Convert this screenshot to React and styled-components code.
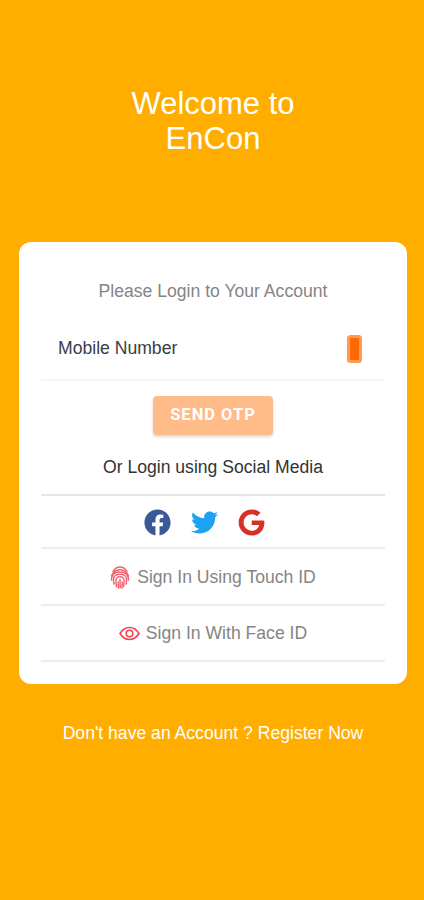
import React from "react";
import styled, { createGlobalStyle } from "styled-components";
import { FaFacebook, FaTwitter, FaGoogle } from "react-icons/fa";

const Global = createGlobalStyle`
  html, body { margin: 0; padding: 0; background: #ffae00; }
  * { box-sizing: border-box; }
`;

const Page = styled.div`
  width: 424px;
  height: 900px;
  background: #ffae00;
  padding: 87px 19px 0;
  font-family: "Liberation Sans", Arial, sans-serif;
`;

const Title = styled.h1`
  margin: 0 0 86px;
  padding-left: 2px;
  color: #fff;
  font-size: 31px;
  font-weight: 400;
  line-height: 34.5px;
  text-align: center;
`;

const Card = styled.div`
  width: 388px;
  height: 442px;
  background: #fff;
  border-radius: 12px;
  padding: 38px 22px 0;
  display: flex;
  flex-direction: column;
  align-items: stretch;
`;

const Subtitle = styled.div`
  color: #858585;
  font-size: 17.6px;
  line-height: 22px;
  text-align: center;
`;

const Field = styled.div`
  height: 79px;
  display: flex;
  align-items: center;
  justify-content: space-between;
  padding: 17px 23px 0 17px;
  border-bottom: 2px solid #f6f6f6;
`;

const FieldLabel = styled.span`
  margin-bottom: 2px;
  color: #3a3d4a;
  font-size: 17.6px;
`;

const PhoneIcon = styled.svg`
  width: 15px;
  height: 28px;
  display: block;
`;

const SendButton = styled.button`
  align-self: center;
  width: 120px;
  height: 39px;
  margin-top: 15px;
  padding: 0 0 2px;
  border: 0;
  border-radius: 4px;
  background: #ffbb88;
  color: #fff;
  font-family: Roboto, sans-serif;
  font-size: 16.5px;
  font-weight: 700;
  letter-spacing: 1px;
  box-shadow: 0 2px 3px rgba(0, 0, 0, 0.16);
`;

const SocialTitle = styled.div`
  margin-top: 21px;
  padding-bottom: 16px;
  border-bottom: 2px solid #e6e6e6;
  color: #333;
  font-size: 17.6px;
  line-height: 22px;
  text-align: center;
`;

const SocialRow = styled.div`
  height: 53px;
  display: flex;
  align-items: center;
  justify-content: center;
  gap: 20px;
  padding: 2px 17px 0 0;
  border-bottom: 2px solid #ededed;
`;

const SocialIcon = styled.span`
  display: flex;
  color: ${(p) => p.$color};
  font-size: 27px;
`;

const SignInRow = styled.div`
  height: 56.5px;
  display: flex;
  align-items: center;
  justify-content: center;
  gap: ${(p) => p.$gap}px;
  padding-top: 2px;
  border-bottom: 2px solid #ededed;
  color: #858585;
  font-size: 17.6px;
`;

const FingerIcon = styled.svg`
  width: 20px;
  height: 23px;
  display: block;
`;

const EyeIcon = styled.svg`
  width: 21px;
  height: 15px;
  display: block;
`;

const Footer = styled.div`
  margin-top: 38px;
  padding-left: 2px;
  color: #fff;
  font-size: 17.6px;
  line-height: 22px;
  text-align: center;
`;

export default function App() {
  return (
    <Page>
      <Global />
      <Title>
        Welcome to
        <br />
        EnCon
      </Title>
      <Card>
        <Subtitle>Please Login to Your Account</Subtitle>
        <Field>
          <FieldLabel>Mobile Number</FieldLabel>
          <PhoneIcon viewBox="0 0 15 28">
            <rect x="0" y="0" width="15" height="28" rx="3.5" fill="#ff9a55" />
            <rect x="3" y="3" width="9" height="22" rx="0.5" fill="#ff6a00" />
          </PhoneIcon>
        </Field>
        <SendButton>SEND OTP</SendButton>
        <SocialTitle>Or Login using Social Media</SocialTitle>
        <SocialRow>
          <SocialIcon $color="#3b5998"><FaFacebook /></SocialIcon>
          <SocialIcon $color="#1da1f2"><FaTwitter /></SocialIcon>
          <SocialIcon $color="#d93025"><FaGoogle /></SocialIcon>
        </SocialRow>
        <SignInRow $gap={7}>
          <FingerIcon viewBox="0 0 20 23" fill="none" stroke="#f2606c" strokeLinecap="round" strokeWidth="1.5">
            <path d="M3 5.500C5 2 8 1 10 1s5 1 7 4.500" />
            <path d="M1.500 10C3 6 6.500 3.700 10 3.700s7 2.300 8.500 6.300" strokeDasharray="3 1" />
            <path d="M1.500 14c0-6 4-8 8.500-8s8.500 2 8.500 8" strokeDasharray="2.500 1" />
            <path d="M4 18c-.500-2-.500-3.500-.500-5 0-3 3-4.800 6.500-4.800s6.500 1.800 6.500 4.800c0 1.500 0 3-.500 5" strokeDasharray="2 1" />
            <path d="M6.500 20.500C6 18 6 15.500 6 14c0-2 1.800-3.300 4-3.300S14 12 14 14c0 2 0 4-.500 6.500" strokeDasharray="2 1" />
            <path d="M10 13.500c0 3 0 5.500.300 8.500" strokeDasharray="2 1" />
            <path d="M8.500 22c-.300-2-.300-4-.300-6M12 22c.200-2 .200-4 .200-6" strokeDasharray="1.500 1" />
          </FingerIcon>
          Sign In Using Touch ID
        </SignInRow>
        <SignInRow $gap={6}>
          <EyeIcon viewBox="0 0 21 15" fill="none" stroke="#f0414f" strokeWidth="1.6">
            <path d="M1 7.500C3.500 3.500 7 1.500 10.500 1.500S17.500 3.500 20 7.500C17.500 11.500 14 13.500 10.500 13.500S3.500 11.500 1 7.500Z" />
            <circle cx="10.500" cy="7.500" r="3.300" />
          </EyeIcon>
          Sign In With Face ID
        </SignInRow>
      </Card>
      <Footer>Don't have an Account ? Register Now</Footer>
    </Page>
  );
}
